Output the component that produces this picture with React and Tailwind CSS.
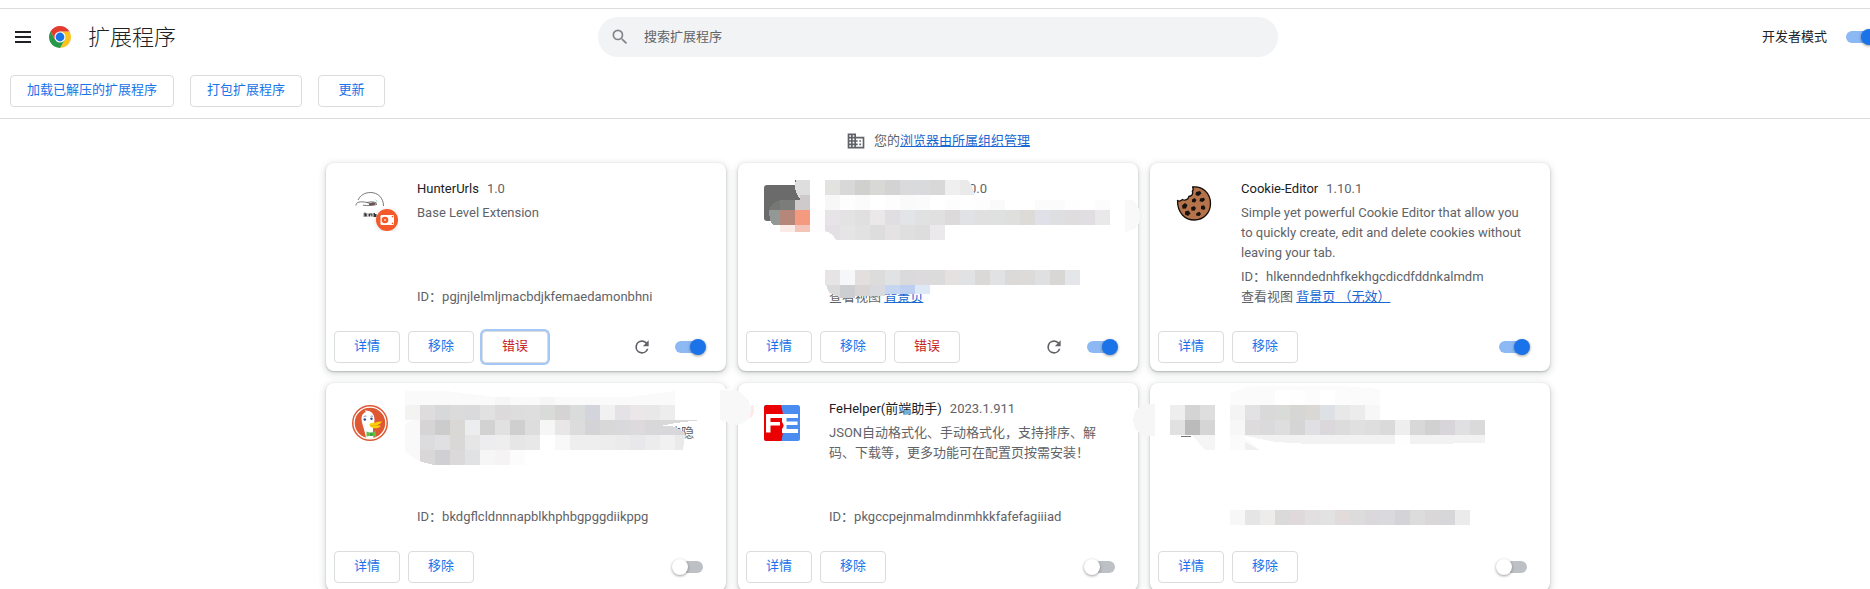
import React from "react";

/* ---------- icons ---------- */

function MenuIcon() {
  return (
    <svg viewBox="0 0 16 12" className="h-3 w-4" fill="#202124" aria-hidden="true">
      <path d="M0 0h16v2H0zM0 5h16v2H0zM0 10h16v2H0z" />
    </svg>
  );
}

function ChromeLogo() {
  return (
    <svg viewBox="0 0 48 48" className="size-6" aria-hidden="true">
      <path d="M24 13H43.05A22 22 0 0 1 24 46L33.5 29.5Z" fill="#fcc31e" />
      <path d="M33.5 29.5 24 46A22 22 0 0 1 4.95 13L14.5 29.5Z" fill="#279847" />
      <path d="M14.5 29.5 4.95 13A22 22 0 0 1 43.05 13H24Z" fill="#e33b2e" />
      <circle cx="24" cy="24" r="11" fill="#fff" />
      <circle cx="24" cy="24" r="8.8" fill="#1a73e8" />
    </svg>
  );
}

function SearchIcon() {
  return (
    <svg viewBox="0 0 24 24" className="size-5 shrink-0" fill="#80868b" aria-hidden="true">
      <path d="M15.5 14h-.79l-.28-.27A6.47 6.47 0 0 0 16 9.5 6.5 6.5 0 1 0 9.5 16c1.61 0 3.09-.59 4.23-1.57l.27.28v.79l5 4.99L20.49 19l-4.99-5zm-6 0C7.01 14 5 11.99 5 9.5S7.01 5 9.5 5 14 7.01 14 9.5 11.99 14 9.5 14z" />
    </svg>
  );
}

function BusinessIcon() {
  return (
    <svg viewBox="0 0 24 24" className="size-5" fill="#5f6368" aria-hidden="true">
      <path d="M12 7V3H2v18h20V7H12zM6 19H4v-2h2v2zm0-4H4v-2h2v2zm0-4H4V9h2v2zm0-4H4V5h2v2zm4 12H8v-2h2v2zm0-4H8v-2h2v2zm0-4H8V9h2v2zm0-4H8V5h2v2zm10 12h-8v-2h2v-2h-2v-2h2v-2h-2V9h8v10zm-2-8h-2v2h2v-2zm0 4h-2v2h2v-2z" />
    </svg>
  );
}

function ReloadIcon() {
  return (
    <svg viewBox="0 0 24 24" className="size-5" fill="#5f6368" aria-hidden="true">
      <path d="M17.65 6.35A7.96 7.96 0 0 0 12 4a8 8 0 1 0 7.73 10h-2.08A6 6 0 1 1 12 6c1.66 0 3.14.69 4.22 1.78L13 11h7V4l-2.35 2.35z" />
    </svg>
  );
}

function HunterIcon() {
  return (
    <svg viewBox="0 0 46 46" className="h-[46px] w-[46px]" aria-hidden="true">
      <g fill="none" stroke="#555" strokeWidth="0.8">
        <path d="M6 15C8.500 10 13 7.500 18.500 7.500C26 7.500 31.500 13 31.500 21" />
        <path d="M4 20.500C4 17 8 16 15 17.500L21 19.500" />
        <path d="M11 20.200C16 21 20 20.500 25 19.500M15 17.500C19 16.500 23 16.500 25 18.500" />
      </g>
      <path d="M17 18.500l4-1.200 3 1-2 2h-5z" fill="#6b5357" />
      <path d="M23.500 14.500l2 2.500" stroke="#8fd0de" strokeWidth="0.8" />
      <path d="M11.500 28.500h1v-1h1v1h2v1h-1v1h1v1h-4v-1h1v-1h-1zM16.500 28.500h4v3h-1.200v-2h-1v2h-1.800zM21.500 28h1.500v1h1.500v3h-3z" fill="#333" />
      <circle cx="35" cy="35" r="11" fill="#f4592a" className="drop-shadow-sm" />
      <rect x="28.500" y="30" width="13.500" height="10" rx="1.200" fill="#fff" />
      <circle cx="33" cy="35" r="3.300" fill="#f4592a" />
      <circle cx="33" cy="35" r="1" fill="#fff" opacity="0.7" />
      <circle cx="40.500" cy="31.600" r="0.800" fill="#f4592a" />
      <circle cx="40.500" cy="38.400" r="0.800" fill="#f4592a" />
    </svg>
  );
}

function GrayIcon() {
  return (
    <svg viewBox="0 0 36 36" className="size-9" aria-hidden="true">
      <rect width="36" height="36" rx="3" fill="#6b6b6b" />
    </svg>
  );
}

function CookieIcon() {
  return (
    <svg viewBox="0 0 36 36" className="size-9" aria-hidden="true">
      <path
        d="M16.500 2C26 .5 34.500 8 34.500 18.500C34.500 28 27.500 35 18.500 35C9 35 1.500 28 1.500 15.500C3 16.500 5 16 6.500 14.500C9 16 12.500 14.500 12.800 11.500C16 11 17.500 8.500 16.300 6.500C17.500 5 17.500 3.500 16.500 2Z"
        fill="#b5734b"
        stroke="#120d0b"
        strokeWidth="1.300"
        strokeLinejoin="round"
      />
      <g fill="#17110f">
        <path d="M20 7l4-1 1.500 2.500-3 2.500-3-1z" />
        <path d="M16 14.500l2.500-1.500 2 2-1.500 2.500-3-.5z" />
        <path d="M24 13.500l4-.8 1 2.300-2.500 2-3-.8z" />
        <path d="M6 20.500l3-2.500 2.500 2-1.500 3.500-3.500.3z" />
        <path d="M15 22.500l3-1.500 2 2-1.500 2.800-3-.4z" />
        <path d="M25 21l3-.8 1.500 2.800-1.500 2-3-1z" />
        <path d="M9 26.500l3.500-1 2 3-2.500 2.500-3-1.500z" />
        <path d="M20.500 28l3-1.200 1.500 2.200-1.500 2-3.500-.4z" />
      </g>
    </svg>
  );
}

function DuckIcon() {
  return (
    <svg viewBox="0 0 36 36" className="size-9" aria-hidden="true">
      <circle cx="18" cy="18" r="18" fill="#de5833" />
      <circle cx="18" cy="18" r="15.900" fill="none" stroke="#fff" strokeWidth="1.300" />
      <path d="M14 32.800C13 26 9.500 18 9.500 13.500C9.500 10 11.500 7.500 14 7L12.500 5.500C18 5 22.500 8 22.500 14.500C22.500 18 21 21 21 25L21.500 33C19 34 16 33.800 14 32.800Z" fill="#fff" />
      <circle cx="12.800" cy="14.500" r="1.300" fill="#2d4f8e" />
      <circle cx="19.500" cy="13.700" r="1.200" fill="#2d4f8e" />
      <path d="M11.500 11.800q1.500-1.300 3-.6M18.500 11.400q1.500-.8 2.500 0" stroke="#4a67a6" strokeWidth=".7" fill="none" />
      <path d="M18 18.500C20 17.500 23 18 26 16.800L30 16.500C29 18.500 27 19.500 25 20.200C27 20.800 29 20 28.500 21.500C27 23.500 22 23.800 19.500 22.500C17.500 21.500 17 19.500 18 18.500Z" fill="#fdd20a" />
      <path d="M18.500 20.600q3.500 1 7-.6" stroke="#d8a400" strokeWidth=".6" fill="none" />
      <path d="M14.500 26.500l4.500 1.500 5-2v6l-5-1.500-4.500 1z" fill="#65bc46" />
      <rect x="18" y="27.500" width="2.500" height="3.500" fill="#43a244" />
    </svg>
  );
}

function FeIcon() {
  return (
    <svg viewBox="0 0 36 36" className="size-9" aria-hidden="true">
      <rect width="36" height="36" rx="2.500" fill="#4a8cf0" />
      <path d="M2.500 0H17L19 9V27L17.500 36H2.500A2.500 2.500 0 0 1 0 33.500V2.500A2.500 2.500 0 0 1 2.500 0Z" fill="#ea0000" />
      <path d="M2 9H18V13H6.500V17H16V20.500H6.500V27.500H2Z" fill="#fff" />
      <path d="M18 9H34V13H22.500V16.500H33.500V20H22.500V24H34V28H18V24L20 20.500L18 17Z" fill="#fff" />
    </svg>
  );
}

/* ---------- mosaics over private details ---------- */

function Cells({ x, y, h = 15, colors }) {
  return colors.split(" ").map((c, i) => (
    <rect key={i} x={x + i * 15} y={y} width="15" height={h} fill={"#" + c} />
  ));
}

function Mosaic({ children }) {
  return (
    <svg
      viewBox="0 0 400 208"
      className="pointer-events-none absolute top-0 left-0 z-10 h-[208px] w-[400px] overflow-visible"
      shapeRendering="crispEdges"
      aria-hidden="true"
    >
      {children}
    </svg>
  );
}

function MosaicB() {
  return (
    <Mosaic>
      <path d="M57 17H72V32H57V17Z" fill="#fff" />
      <path d="M57 17H62V37H57Z" fill="#6b6b6b" />
      <path d="M58 17H72V36H62Q57 30 57 22Z" fill="#dedede" />
      <path d="M42 37H57V47H31Q34 39 42 37Z" fill="#757775" />
      <rect x="42" y="37" width="15" height="10" fill="#7b7d7a" />
      <rect x="57" y="37" width="15" height="10" fill="#cecacb" />
      <rect x="62" y="32" width="10" height="5" fill="#cecacb" />
      <path d="M31 47H42V62H35Q31 58 31 47Z" fill="#939796" />
      <Cells x={42} y={47} colors="b5877b f59a7f" />
      <Cells x={42} y={62} h={7} colors="faebe6 f3c5b8" />
      <rect x="72" y="47" width="15" height="22" fill="#fdfdfd" />
      <Cells x={87} y={17} colors="e2e2e0 d8d8d8 d0d0ce d8d8d7 d4d3d4 dad9db d9dadb d8d8d9 eeefee" />
      <path d="M222 17H229Q235 21 236 32H222Z" fill="#ebeaeb" />
      <Cells x={87} y={32} colors="f7f7f7 fdfdfd fbfbfb ffffff fdfdfd fafafa fbfbfb ffffff" />
      <Cells x={207} y={37} h={10} colors="fdfdfd fefefe fdfdfd fafafa ffffff ffffff fbfbfb fbfbfb fefefe ffffff fcfcfc" />
      <Cells x={87} y={47} colors="e6e4e6 e2e3e2 e0e0e0 ebe8ea e0dee0 e3e4e8 e0e2e2 e0e0e0 dddadb e1e2e6 e0e0e0 dfe0e0 dfdfde dcdbd8 dfe0e8 dddfe1 e0dddf e0dee0 e9e9e9" />
      <path d="M87 62H102V77H98Q94 70 87 68Z" fill="#e3e1e3" />
      <Cells x={102} y={62} colors="e5e5e5 e2e2e2 dddddd e5e2e3 dfdfdf dddddd ebe9eb" />
      <Cells x={87} y={107} colors="e6e4e5 f5f7f9 e3dfde dddcdd e1e2e4 dad9dc dcdadc dbdbdb e5e1e0 e1e2e4 dad9d7 e0e2e4 dcd9d9 dddbda dfe0e2 d9d6d6 e4e6ea" />
      <path d="M88 122H102V134Q90 132 88 122Z" fill="#dadadb" />
      <rect x="102" y="122" width="15" height="13" fill="#cdced1" />
      <Cells x={117} y={122} h={11} colors="d9d5d4 d8dadf" />
      <Cells x={147} y={122} h={9} colors="c6d6f0 bccff0 dee8f7" />
      <path d="M387 37H394Q402 42 402 53T394 67L387 69Z" fill="#f9f9f9" />
    </Mosaic>
  );
}

function MosaicD() {
  return (
    <Mosaic>
      <path d="M79 8H120L169 14H304L349 8V22H79Z" fill="#fafafa" />
      <rect x="169" y="14" width="15" height="8" fill="#f6f6f6" />
      <rect x="214" y="14" width="15" height="8" fill="#f6f6f6" />
      <path d="M349 8L366 6L406 6V30L365 37H349Z" fill="#fff" />
      <Cells x={79} y={22} colors="f3f3f2 dedcdd d6d8da dbdbdc dadadc e0e1e0 dcdadb dddddd dedede d9dbd9 d6d3d5 dadcdb d4d5dc f1f1f1 e4e2e4 ebe7e9 e8e8e8 ededed" />
      <path d="M79 41Q82 37 94 37V78Q84 74 79 67Z" fill="#faf9f9" />
      <Cells x={94} y={37} colors="d6d4d5 cccccc dad8d5 ebedef d2d2d2 e1e1e1 cfcfd0 dddddd f6f6f6 e8e6e7 dcdcdc d4d3d5 d8d8d9 d9d9db dcdadc" />
      <path d="M319 37H375L350 40L334 43H319Z" fill="#d8d8d9" />
      <path d="M319 43H345Q356 45 359 52H319Z" fill="#d8d7d9" />
      <Cells x={94} y={52} colors="dcdcde e0dfe1 d9d8d6 e6e6e6 edecee efeeef e6e6e6 e8e8e8 ffffff f8f8f8 eeeeee eeeeee eeedee ebebeb e8e7e9 ececec f1f1f1" />
      <path d="M349 52H359L357 67H349Z" fill="#eaeaea" />
      <path d="M94 67H109V82Q98 80 94 78Z" fill="#d9d7d8" />
      <Cells x={109} y={67} colors="d0cfd3 dbd9da e1e2e4 f6f6f7 f5f3f4 fcfcfc" />
      <path d="M394 7H410Q425 14 425 27T410 42L394 37Z" fill="#f8f8f8" />
      <path d="M425 22Q428 22 428 27T424 36Z" fill="#ffeaea" />
    </Mosaic>
  );
}

function MosaicF() {
  return (
    <Mosaic>
      <path d="M5 21V53H-5Q-17 48 -17 37T-5 21Z" fill="#f6f6f6" />
      <Cells x={20} y={22} colors="eeeeee d4d4d4 dedede" />
      <Cells x={20} y={37} colors="e1e1e1 bbbbbb d5d5d5" />
      <rect x="31" y="53" width="10" height="1" fill="#777" />
      <path d="M42 52H65V67H55Z" fill="#f5f5f5" />
      <path d="M80 10L102 3H190L230 6V22H80Z" fill="#fbfbfb" />
      <Cells x={125} y={7} colors="ffffff fefefe fcfcfc ffffff fcfcfc" />
      <Cells x={80} y={22} colors="f4f4f4 e2e2e4 d8d9d8 d9dbd9 d6d7d4 d9d8d5 dde1e5 e8e8e9 ececec f7f7f7" />
      <Cells x={80} y={37} colors="f7f7f7 dddbdc dadadd dedede d5d5d6 e0e0e4 dad8da dcdcdc e0e0e0 dedede dadada eeeeee d8d8d8 d1d1d1 d7d5d9 e0e0e3 dadada" />
      <path d="M92 52H335V60L270 61H160L125 59Z" fill="#f2f2f2" />
      <rect x="245" y="52" width="15" height="10" fill="#fefefe" />
      <path d="M80 52H92L110 67H80Z" fill="#fbfbfb" />
      <path d="M95 59L110 67H95Z" fill="#f0f0f0" />
      <Cells x={80} y={127} colors="f7f7f7 e5e5e5 edeceb dadada dfd9db e2dfe1 e2e2e2 e1dcdb dbdcdb dad8da dadade d4d4d8 dcdcdc dad7d9 d7d7da ebebeb" />
    </Mosaic>
  );
}

/* ---------- controls ---------- */

function Button({ children, danger, focused, wide }) {
  return (
    <button
      type="button"
      className={[
        "h-8 rounded border border-[#dadce0] bg-white pb-0.5 text-[13px] leading-5",
        wide ? "min-w-[67px] px-4" : "w-[66px]",
        danger ? "text-[#c5221f]" : "text-[#1a73e8]",
        focused ? "ring-2 ring-[#a3c7f6]" : "",
      ].join(" ")}
    >
      {children}
    </button>
  );
}

function Toggle({ on, label, id }) {
  return (
    <input
      type="checkbox"
      id={id}
      aria-label={label}
      defaultChecked={on}
      className="relative h-3 w-7 shrink-0 appearance-none rounded-full bg-[#bdc1c6] before:absolute before:-top-0.5 before:-left-[3px] before:size-4 before:rounded-full before:bg-white before:shadow-[0_1px_3px_rgba(0,0,0,0.4)] checked:bg-[#8cb8f4] checked:before:left-[15px] checked:before:bg-[#1a73e8]"
    />
  );
}

/* ---------- cards ---------- */

const link = "text-[#1967d2] underline";

const extensions = [
  {
    key: "hunter",
    icon: HunterIcon,
    name: "HunterUrls",
    version: "1.0",
    description: "Base Level Extension",
    id: "pgjnjlelmljmacbdjkfemaedamonbhni",
    errors: true,
    focused: true,
    reload: true,
    on: true,
  },
  {
    key: "dev",
    icon: GrayIcon,
    title: <span className="ml-[140px] text-[#5f6368]">0.0</span>,
    views: "背景页",
    errors: true,
    reload: true,
    on: true,
    mosaic: MosaicB,
  },
  {
    key: "cookie",
    icon: CookieIcon,
    name: "Cookie-Editor",
    version: "1.10.1",
    description:
      "Simple yet powerful Cookie Editor that allow you to quickly create, edit and delete cookies without leaving your tab.",
    id: "hlkenndednhfkekhgcdicdfddnkalmdm",
    views: "背景页 （无效）",
    on: true,
  },
  {
    key: "duck",
    icon: DuckIcon,
    description: <span className="block pr-3 text-right">的隐</span>,
    id: "bkdgflcldnnnapblkhphbgpggdiikppg",
    mosaic: MosaicD,
  },
  {
    key: "fe",
    icon: FeIcon,
    name: "FeHelper(前端助手)",
    version: "2023.1.911",
    description: "JSON自动格式化、手动格式化，支持排序、解码、下载等，更多功能可在配置页按需安装！",
    id: "pkgccpejnmalmdinmhkkfafefagiiiad",
  },
  { key: "hidden", mosaic: MosaicF },
];

function Card({ ext }) {
  const Icon = ext.icon;
  const Cover = ext.mosaic;
  return (
    <article className="relative flex h-[208px] flex-col rounded-lg bg-white text-[13px] leading-5 text-[#5f6368] shadow-[0_1px_2px_rgba(60,64,67,0.3),0_2px_6px_2px_rgba(60,64,67,0.15)]">
      <div className="flex min-h-0 flex-1 pt-4 pr-5 pl-[26px]">
        <div className="mt-1.5 h-9 w-9 shrink-0">{Icon && <Icon />}</div>
        <div className="ml-[29px] flex h-32 min-w-0 flex-1 flex-col">
          <h2 className="h-5 text-[#202124]">
            {ext.title || ext.name}
            {ext.version && <span className="ml-2 text-[#5f6368]">{ext.version}</span>}
          </h2>
          <p className="mt-1 flex-1">{ext.description}</p>
          {ext.id && <p>ID：{ext.id}</p>}
          {ext.views && (
            <p>
              查看视图{" "}
              <a href="#views" className={link}>
                {ext.views}
              </a>
            </p>
          )}
        </div>
      </div>
      <div className="flex items-center gap-2 pr-[23px] pb-2 pl-2">
        <Button>详情</Button>
        <Button>移除</Button>
        {ext.errors && (
          <Button danger focused={ext.focused}>
            错误
          </Button>
        )}
        <div className="ml-auto flex items-center gap-[23px]">
          {ext.reload && (
            <button type="button" aria-label="重新加载">
              <ReloadIcon />
            </button>
          )}
          <Toggle on={ext.on} label="启用" />
        </div>
      </div>
      {Cover && <Cover />}
    </article>
  );
}

export default function App() {
  return (
    <div className="h-screen overflow-hidden bg-white font-[Roboto,'Noto_Sans_CJK_SC',sans-serif] text-[13px] leading-5 text-[#202124]">
      <div className="-mr-1.5">
        <header className="mt-2 border-y border-[#dadce0]">
          <div className="grid h-14 grid-cols-[1fr_680px_1fr] items-center">
            <div className="flex items-center pl-[15px]">
              <button type="button" aria-label="主菜单">
                <MenuIcon />
              </button>
              <span className="mr-4 ml-[17px]">
                <ChromeLogo />
              </span>
              <h1 className="pt-0.5 text-[22px] leading-8 font-light">扩展程序</h1>
            </div>
            <label className="flex h-10 items-center gap-3.5 rounded-full bg-[#f1f3f4] pr-5 pl-3">
              <SearchIcon />
              <input
                type="text"
                aria-label="搜索扩展程序"
                placeholder="搜索扩展程序"
                className="min-w-0 flex-1 bg-transparent outline-none placeholder:text-[#5f6368]"
              />
            </label>
            <div className="flex items-center justify-end gap-[19px] pr-0.5">
              <label htmlFor="dev-mode">开发者模式</label>
              <Toggle id="dev-mode" on label="开发者模式" />
            </div>
          </div>
          <div className="flex gap-4 px-2.5 pt-2.5 pb-[11px]">
            <Button wide>加载已解压的扩展程序</Button>
            <Button wide>打包扩展程序</Button>
            <Button wide>更新</Button>
          </div>
        </header>
        <main>
          <div className="flex h-11 items-center justify-center gap-2 text-[#5f6368]">
            <BusinessIcon />
            <p>
              您的
              <a href="#managed" className={link}>
                浏览器由所属组织管理
              </a>
            </p>
          </div>
          <div className="grid grid-cols-[repeat(3,400px)] justify-center gap-3 pb-6">
            {extensions.map((ext) => (
              <Card key={ext.key} ext={ext} />
            ))}
          </div>
        </main>
      </div>
    </div>
  );
}
